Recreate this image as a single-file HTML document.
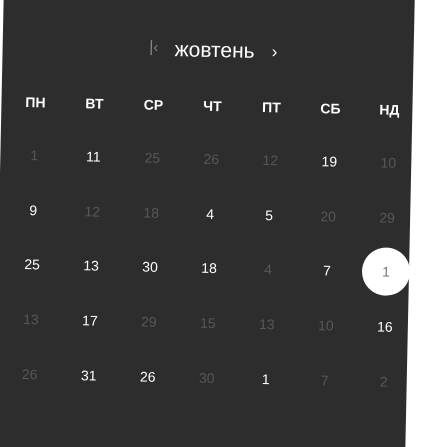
<!DOCTYPE html>
<html><head><meta charset="utf-8"><style>
html,body{margin:0;padding:0;width:438px;height:447px;overflow:hidden;background:#fff;font-family:"Liberation Sans",sans-serif}
.wrap{position:absolute;left:0;top:0;width:438px;height:447px;overflow:hidden}
.card{position:absolute;left:-1px;top:-60px;width:411px;height:512px;background:#2d2d2d;transform:rotate(1.2deg);transform-origin:214px 283px}
.t{position:absolute;transform:translate(-50%,-50%);white-space:nowrap}
.n{font-size:14px;color:#fff}
.d{color:#575757}
.w{font-size:14px;font-weight:bold;color:#fff}
.circ{position:absolute;width:48px;height:48px;border-radius:50%;background:#fff;transform:translate(-50%,-50%)}
</style></head><body>
<div class="wrap">
<div class="card">
<div class="t" style="left:212px;top:111px;font-size:21px;color:#fff">жовтень</div>
<div class="t" style="left:151px;top:109px;font-size:16px;color:#888">|<span style="font-size:14px">‹</span></div>
<div class="t" style="left:272px;top:111px;font-size:17px;color:#fff">›</div>
</div>
</div>
<script>
var c=document.querySelector('.card');
var xs=[34,93,152,211,270,329,388];
var wk=['ПН','ВТ','СР','ЧТ','ПТ','СБ','НД'];
var h='';
wk.forEach(function(w,i){h+='<div class="t w" style="left:'+xs[i]+'px;top:166px">'+w+'</div>';});
var rows=[
[['1',1],['11',0],['25',1],['26',1],['12',1],['19',0],['10',1]],
[['9',0],['12',1],['18',1],['4',0],['5',0],['20',1],['29',1]],
[['25',0],['13',0],['30',0],['18',0],['4',1],['7',0],['1',2]],
[['13',1],['17',0],['29',1],['15',1],['13',1],['10',1],['16',0]],
[['26',1],['31',0],['26',0],['30',1],['1',0],['7',1],['2',1]]];
rows.forEach(function(r,j){var y=219+j*54.7;r.forEach(function(c2,i){
if(c2[1]==2){h+='<div class="circ" style="left:'+(xs[i])+'px;top:'+y+'px"></div><div class="t n" style="left:'+xs[i]+'px;top:'+y+'px;color:#777">'+c2[0]+'</div>';}
else h+='<div class="t n'+(c2[1]?' d':'')+'" style="left:'+xs[i]+'px;top:'+y+'px">'+c2[0]+'</div>';});});
c.insertAdjacentHTML('beforeend',h);
</script>
</body></html>
